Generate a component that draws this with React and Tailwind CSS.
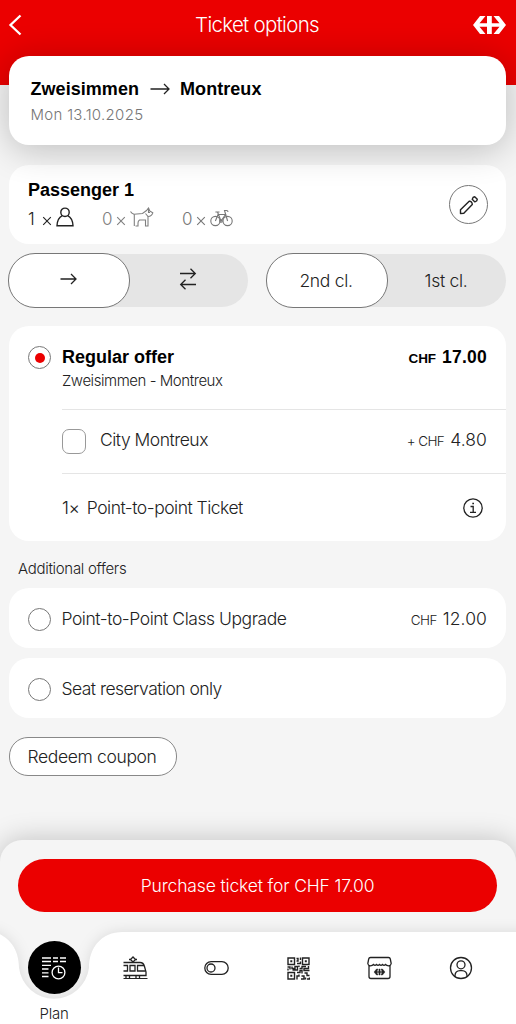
import React, { useState } from "react";

const Price = ({ value, prefix, bold }) => (
  <span
    className={
      bold
        ? "flex items-baseline gap-[6px] font-bold text-black"
        : "flex items-baseline gap-[6px] font-light text-[#222]"
    }
  >
    <span className={bold ? "text-[13.5px] tracking-[-0.1px]" : "text-[13.5px] tracking-[-0.6px]"}>
      {prefix}CHF
    </span>
    <span className={bold ? "text-[17.5px] tracking-[0.25px]" : "text-[17.5px] tracking-[0.1px]"}>
      {value}
    </span>
  </span>
);

const Radio = ({ checked }) => (
  <span className="flex h-[23px] w-[23px] shrink-0 items-center justify-center rounded-full border border-[#777] bg-white">
    {checked && <span className="h-[10px] w-[10px] rounded-full bg-[#eb0000]" />}
  </span>
);

const SbbLogo = ({ className }) => (
  <svg viewBox="0 0 33 18" className={className} fill="currentColor">
    <path d="M0 9 7 0h5.5l-6 7.3H14V0h4.8v7.3h7.7L20.5 0H26l7 9-7 9h-5.5l6-7.3h-7.7V18H14v-7.3H6.5l6 7.3H7z" />
  </svg>
);

const TimesIcon = () => (
  <svg width="10" height="10" viewBox="0 0 10 10" className="mt-[4px]" fill="none" stroke="currentColor" strokeWidth="1.1">
    <path d="M1.200 1.200 8.800 8.800M8.800 1.200 1.200 8.800" />
  </svg>
);

const PersonIcon = () => (
  <svg width="18" height="20" viewBox="0 0 18 20" fill="none" stroke="#222" strokeWidth="1.4">
    <circle cx="9" cy="5.300" r="4.200" />
    <path d="M6.300 8.600C3.500 10 1.200 13.500 1 18.800H17C16.800 13.500 14.500 10 11.700 8.600" />
  </svg>
);

const DogIcon = () => (
  <svg width="24" height="20" viewBox="0 0 24 20" fill="none" stroke="#808080" strokeWidth="1.1">
    <path d="M.5 4.500Q1.500 6.500 4 7.200L12.500 6.500 16.500 3.500 18.500 1 19.800 4 22.800 5.800Q22 9 18 9.500V19H15.500V13H9.500Q8 14 8 16V19H5.500" />
    <path d="M4.300 7.200V19M18.500 1V5.500H20M15.500 6.500 18 9.500" />
  </svg>
);

const BikeIcon = () => (
  <svg width="23" height="18" viewBox="0 0 23 18" fill="none" stroke="#777" strokeWidth="1.1">
    <circle cx="5.400" cy="12" r="4.600" />
    <circle cx="17.600" cy="12" r="4.600" />
    <path d="M5.400 12 8 5.500H15.500L11 12 7.500 3M5.400 3H9.500M17.600 12 14.500 1.500H16.500Q18 1.500 18 3" />
    <circle cx="11" cy="12" r="1.300" />
  </svg>
);

const PencilIcon = () => (
  <svg width="20" height="20" viewBox="0 0 20 20" fill="none" stroke="#222" strokeWidth="1.400" strokeLinejoin="round">
    <path d="M1.500 18.500V14.800L10.200 6.300Q11.400 6 12.400 7T13.300 9.600L4.800 18.300z" />
    <path d="M15.700 1.700 18.300 4.200Q18.300 6 15.900 6.900L13.200 4.300Q13.800 1.800 15.700 1.700z" />
  </svg>
);

const ArrowRight = ({ width = 17 }) => (
  <svg width={width} height="12" viewBox={`0 0 ${width} 12`} fill="none" stroke="#222" strokeWidth="1.300">
    <path d={`M.5 6H${width - 1}M${width - 6} 1l5 5-5 5`} />
  </svg>
);

const SwapIcon = () => (
  <svg width="18" height="22" viewBox="0 0 18 22" fill="none" stroke="#222" strokeWidth="1.300">
    <path d="M1 5.500H16.500M11.500.8 16.300 5.500 11.500 10.200M17 16.500H1.500M6.500 11.800 1.700 16.500 6.500 21.200" />
  </svg>
);

const InfoIcon = () => (
  <svg width="20" height="20" viewBox="0 0 20 20" fill="none" stroke="#222" strokeWidth="1.300">
    <circle cx="10" cy="10" r="9.200" />
    <path d="M7.500 8.500H10.200V14.300M7 14.300H13" />
    <path d="M9.300 5.500H11" strokeWidth="1.600" />
  </svg>
);

const PlanIcon = () => (
  <svg width="26" height="24" viewBox="0 0 26 24" fill="none" stroke="#fff" strokeWidth="1.300">
    <path d="M1 2H10M12 2H17M19 2H25M1 5.500H10M12 5.500H17M19 5.500H25M1 9.300H10M1 13H7.500M1 16.800H7.500M1 20.500H7.500" />
    <circle cx="17.500" cy="16.500" r="6.400" />
    <path d="M17.500 11.500V16.700H21.500" />
  </svg>
);

const TrainIcon = () => (
  <svg width="25" height="24" viewBox="0 0 25 24" fill="none" stroke="#222" strokeWidth="1.300">
    <path d="M.5 6.500H17Q20.500 6.500 21.500 10.500L23 16V19.500H.5" />
    <path d="M.5 22.500H24.500" strokeWidth="1" />
    <path d="M10 1 7.500 3.500 10 6 12.500 3.500zM6 3.500H7.500M12.500 3.500H14" />
    <path d="M.5 9.500H4.500V15H.5M7 9.500H12V15H7zM21 9.500H14.500V15H22.500" />
    <path d="M3 19.500V22.500M6.500 19.500V22.500M13 19.500V22.500M16.500 19.500V22.500" />
  </svg>
);

const ToggleIcon = () => (
  <svg width="25" height="24" viewBox="0 0 25 24" fill="none" stroke="#222" strokeWidth="1.300">
    <rect x=".8" y="5.700" width="23.400" height="12.600" rx="6.300" />
    <circle cx="7" cy="12" r="4" />
  </svg>
);

const QrIcon = () => (
  <svg width="23" height="23" viewBox="0 0 23 23" fill="none" stroke="#222" strokeWidth="1.400">
    <path d="M1 1H7.500V7.500H1zM15.500 1H22V7.500H15.500zM1 15.500H7.500V22H1z" />
    <path d="M3.300 4.300H5.300M17.800 4.300H19.800M3.300 18.700H5.300" strokeWidth="2" />
    <path d="M9.500 1.500H11V4H9.500M13.500.5V3M10 6.500H13.500V4.500M12 8.500V10M.5 10H3V12.500M1 13.500V11.500M5 9.500V11.500H8V9.500H10.500V13H5.500M12.500 11.500H15V9.500H19M21.500 9V11.500H17V13.500H22.500M10 15.500H13V13.500H15V16.500M10 22.500V19H12V17.500M14 22H17V19H14.500M17.500 16H20V18.500H22.500M20 22H22.500V20.500M18.500 20.500V22.500" />
  </svg>
);

const ShopIcon = () => (
  <svg width="25" height="24" viewBox="0 0 25 24" fill="none" stroke="#222" strokeWidth="1.300">
    <path d="M3.500 1.500H21.500Q23 1.500 23.300 3L24.200 7.500Q24 9.500 21.700 9.800 19.500 9.700 18.500 8.500 17 10 15.500 8.500 14 10 12.500 8.500 11 10 9.500 8.500 8 10 6.500 8.500 5.500 9.700 3.300 9.800 1 9.500.8 7.500L1.700 3Q2 1.500 3.500 1.500zM2 9.500V20.500Q2 22.500 4 22.500H21Q23 22.500 23 20.500V9.500" />
    <path d="M7 16 9.500 13H11L9.800 15.400H11.900V13H13.100V15.400H15.200L14 13H15.500L18 16 15.500 19H14L15.200 16.600H13.100V19H11.900V16.600H9.800L11 19H9.500z" fill="#222" stroke="#222" strokeWidth=".4" />
  </svg>
);

const AccountIcon = () => (
  <svg width="24" height="24" viewBox="0 0 24 24" fill="none" stroke="#222" strokeWidth="1.300">
    <circle cx="12" cy="12" r="10.500" />
    <circle cx="12" cy="8.800" r="4" />
    <path d="M6 20.500V19.500Q6.300 14.800 11 14.700H13Q17.700 14.800 18 19.500V20.500" />
  </svg>
);

const navItems = [
  { id: "trips", Icon: TrainIcon },
  { id: "easyride", Icon: ToggleIcon },
  { id: "tickets", Icon: QrIcon },
  { id: "shop", Icon: ShopIcon },
  { id: "profile", Icon: AccountIcon },
];

const App = () => {
  const [roundTrip, setRoundTrip] = useState(false);
  const [firstClass, setFirstClass] = useState(false);
  const [offer, setOffer] = useState("regular");

  const active =
    "-my-px flex h-[55px] w-[122px] items-center justify-center rounded-[27px] border border-[#777] bg-white";
  const inactive = "flex h-[53px] w-[118px] items-center justify-center";

  return (
    <div className="flex h-[1024px] w-[516px] flex-col overflow-hidden bg-[#f5f5f5] font-['Inter','Liberation_Sans',sans-serif] font-light text-[#222]">
      <header className="h-[85px] shrink-0 bg-[#eb0000] pl-[8px] pr-[10px] text-white">
        <div className="flex h-[50px] items-center justify-between">
          <svg width="14" height="22" viewBox="0 0 14 22" fill="none" stroke="white" strokeWidth="2.300">
            <path d="M12.500 1.500 2.500 11 12.500 20.500" />
          </svg>
          <h1 className="ml-[19px] text-[20.5px] tracking-[-0.7px]">Ticket options</h1>
          <SbbLogo className="h-[18px] w-[33px]" />
        </div>
      </header>

      <section className="relative z-10 ml-[9px] mr-[10px] -mt-[29px] h-[89px] shrink-0 rounded-[20px] bg-white px-[21.5px] pt-[21px] shadow-[0_4px_36px_rgba(0,0,0,0.24)]">
        <div className="flex h-6 items-center gap-[10.5px] font-['Liberation_Sans',sans-serif] text-[18px] font-bold tracking-[0.05px] text-black">
          <span>Zweisimmen</span>
          <ArrowRight width={20} />
          <span>Montreux</span>
        </div>
        <p className="mt-[2px] text-[15px] leading-6 tracking-[0.3px] text-[#767676]">Mon 13.10.2025</p>
      </section>

      <section className="ml-[9px] mr-[10px] mt-5 flex h-[79px] shrink-0 items-center justify-between rounded-[20px] bg-white pl-[19px] pr-[18px]">
        <div>
          <h2 className="-mt-px font-['Liberation_Sans',sans-serif] text-[18px] font-bold leading-6 text-black">
            Passenger 1
          </h2>
          <div className="mt-[5px] flex h-6 items-center text-[17px] leading-6">
            <span className="flex w-[74px] items-center">
              <span className="w-[14px]">1</span>
              <TimesIcon />
              <span className="-mt-[4px] ml-[4px]"><PersonIcon /></span>
            </span>
            <span className="flex w-[80px] items-center text-[#808080]">
              <span className="w-[14px]">0</span>
              <TimesIcon />
              <span className="-mt-[4px] ml-[4px]"><DogIcon /></span>
            </span>
            <span className="flex items-center text-[#777]">
              <span className="w-[14px]">0</span>
              <TimesIcon />
              <span className="-mt-px ml-[4px]"><BikeIcon /></span>
            </span>
          </div>
        </div>
        <button className="flex h-[39px] w-[39px] items-center justify-center rounded-full border border-[#777] bg-white">
          <PencilIcon />
        </button>
      </section>

      <div className="ml-[8px] mr-[10px] mt-[10px] flex h-[53px] shrink-0 justify-between text-[17.5px] tracking-[-0.3px]">
        <div className="flex w-[240px] rounded-[27px] bg-[#e5e5e5] *:pb-[3px]">
          <button onClick={() => setRoundTrip(false)} className={roundTrip ? inactive : active}>
            <span className="-ml-[2px]"><ArrowRight /></span>
          </button>
          <button onClick={() => setRoundTrip(true)} className={roundTrip ? active : inactive}>
            <span className="-ml-[3px]"><SwapIcon /></span>
          </button>
        </div>
        <div className="flex w-[240px] rounded-[27px] bg-[#e5e5e5] *:pr-[2px] *:pt-px">
          <button onClick={() => setFirstClass(false)} className={firstClass ? inactive : active}>
            2nd cl.
          </button>
          <button onClick={() => setFirstClass(true)} className={firstClass ? active : inactive}>
            1st cl.
          </button>
        </div>
      </div>

      <section className="ml-[9px] mr-[10px] mt-[19px] h-[215px] shrink-0 rounded-[20px] bg-white pl-[19px]">
        <div onClick={() => setOffer("regular")} className="flex h-[83px] gap-[11px] pt-[20px]">
          <Radio checked={offer === "regular"} />
          <div className="-mt-px flex-1">
            <div className="flex h-6 items-center justify-between pr-[19px] font-['Liberation_Sans',sans-serif]">
              <h2 className="text-[18px] font-bold text-black">Regular offer</h2>
              <Price value="17.00" bold />
            </div>
            <p className="text-[15px] leading-6 tracking-[-0.45px]">Zweisimmen - Montreux</p>
          </div>
        </div>
        <div className="ml-[34px] flex h-[65px] items-center border-y border-[#e5e5e5] pr-[19px]">
          <span className="h-[25px] w-[24px] rounded-[7px] border border-[#999]" />
          <span className="-mt-[2px] ml-[14px] flex-1 text-[17.500px] tracking-[-0.5px]">City Montreux</span>
          <span className="-mt-[2px]"><Price value="4.80" prefix="+ " /></span>
        </div>
        <div className="ml-[34px] flex h-[67px] items-center justify-between pr-[23.5px] text-[17.500px] tracking-[-0.5px]">
          <span className="flex gap-[7.5px] pt-[2px]"><span>1×</span><span>Point-to-point Ticket</span></span>
          <InfoIcon />
        </div>
      </section>

      <h3 className="ml-[18px] mt-[16px] shrink-0 text-[15px] leading-6 tracking-[-0.3px]">Additional offers</h3>

      <section
        onClick={() => setOffer("upgrade")}
        className="ml-[9px] mr-[10px] mt-[7px] flex h-[60px] shrink-0 items-center gap-[10.5px] rounded-[20px] bg-white pl-[19px] pr-[19px] pt-[2px]"
      >
        <Radio checked={offer === "upgrade"} />
        <span className="flex-1 text-[17.500px] tracking-[-0.45px]">Point-to-Point Class Upgrade</span>
        <Price value="12.00" />
      </section>
      <section
        onClick={() => setOffer("seat")}
        className="ml-[9px] mr-[10px] mt-[10px] flex h-[60px] shrink-0 items-center gap-[10.5px] rounded-[20px] bg-white px-[19px] pt-[2px]"
      >
        <Radio checked={offer === "seat"} />
        <span className="text-[17.500px] tracking-[-0.54px]">Seat reservation only</span>
      </section>

      <button className="ml-[9px] mt-[19px] h-[39px] w-[168px] shrink-0 rounded-[19px] border border-[#888] bg-white pr-[2px] pt-px text-[17.500px] tracking-[-0.35px]">
        Redeem coupon
      </button>

      <footer className="mt-auto h-[184px] shrink-0 rounded-t-[22px] bg-[#f5f5f5] pt-[19px] shadow-[0_0_28px_rgba(0,0,0,0.22)]">
        <button className="mx-[18px] block h-[53px] w-[479px] rounded-[27px] bg-[#eb0000] pt-px text-[17.500px] tracking-[-0.15px] text-white">
          Purchase ticket for CHF 17.00
        </button>
        <nav className="relative mt-5 h-[92px]">
          <svg className="absolute left-0 -top-5" width="516" height="112" viewBox="0 -20 516 112">
            <path
              className="drop-shadow-[0_0_7px_rgba(0,0,0,0.11)]"
              fill="white"
              d="M-30 -1H-10C10 3 19 18 19 36A35.300 35.300 0 0 0 89 36C89 16 101 0 123 0H546V122H-30z"
            />
          </svg>
          <div className="relative flex pl-[13.500px]">
            <button className="flex w-[81.300px] flex-col items-center pt-[9px]">
              <span className="flex h-[53px] w-[53px] items-center justify-center rounded-full bg-black">
                <PlanIcon />
              </span>
              <span className="mt-[10px] text-[15px] leading-5 tracking-[-0.2px]">Plan</span>
            </button>
            {navItems.map(({ id, Icon }) => (
              <button key={id} aria-label={id} className="flex h-[72px] w-[81.300px] items-center justify-center">
                <Icon />
              </button>
            ))}
          </div>
        </nav>
      </footer>
    </div>
  );
};

export default App;
